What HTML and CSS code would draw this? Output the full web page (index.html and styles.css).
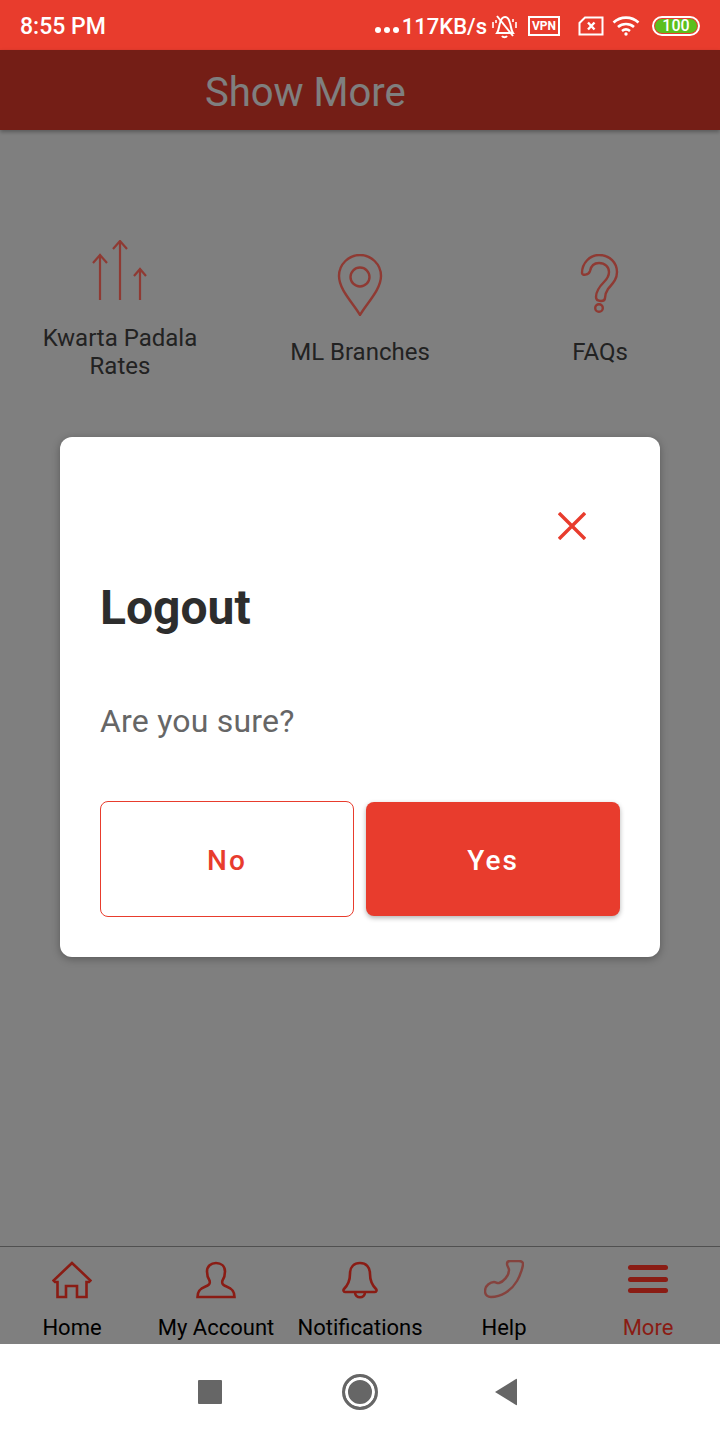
FILE: index.html
```html
<!DOCTYPE html>
<html lang="en">
<head>
    <meta charset="UTF-8">
    <meta name="viewport" content="width=device-width, initial-scale=1.0">
    <title>Show More</title>
    <link rel="stylesheet" href="styles.css">
</head>
<body>
    <!-- Status bar -->
    <div class="status-bar">
        <span class="status-time">8:55 PM</span>
        <div class="status-right">
            <span class="status-dots"><i></i><i></i><i></i></span>
            <span class="status-speed">117KB/s</span>
            <svg class="icon-muted" width="27" height="26" viewBox="0 0 27 26" fill="none" stroke="#fff" stroke-width="2">
                <path d="M6 20c2-3 2-7 3-10 1-4 3-6 5-6s4 2 5 6c1 3 1 7 3 10z"/>
                <path d="M11 23c1 1.500 4 1.500 5 0"/>
                <path d="M6 3l16 20"/>
                <path d="M2 9v6M5 7v3M25 9v6M22 6v3" stroke-width="1.600"/>
            </svg>
            <span class="status-vpn">VPN</span>
            <svg class="icon-sim" width="26" height="20" viewBox="0 0 26 20" fill="none" stroke="#fff" stroke-width="2">
                <path d="M7 1.500h17.500v17H1.500V7z"/>
                <path d="M10 6.500l6.500 7M16.500 6.500l-6.500 7" stroke-width="2.400"/>
            </svg>
            <svg class="icon-wifi" width="30" height="22" viewBox="0 0 30 22" fill="none" stroke="#fff" stroke-width="2.600">
                <path d="M1.500 7.500c7-6.500 18-6.500 25 0"/>
                <path d="M6 12c4.500-4 11.500-4 16 0"/>
                <path d="M10 16c2.500-2 5.500-2 8 0"/>
                <circle cx="14" cy="19" r="1.700" fill="#fff" stroke="none"/>
            </svg>
            <span class="status-battery"><span class="battery-fill">100</span></span>
        </div>
    </div>

    <main class="screen">
        <header class="top-bar">
            <h1>Show More</h1>
        </header>

        <section class="shortcuts">
            <div class="shortcut">
                <svg width="60" height="62" viewBox="0 0 60 62" fill="none" stroke="#8f3a33" stroke-width="2.200">
                    <path d="M10 60V15M3 23l7-8 7 8"/>
                    <path d="M30 60V1M23 9l7-8 7 8"/>
                    <path d="M50 60V29M44 36l6-7 6 7"/>
                </svg>
                <span>Kwarta Padala<br>Rates</span>
            </div>
            <div class="shortcut">
                <svg width="60" height="62" viewBox="0 0 60 62" fill="none" stroke="#8f3a33" stroke-width="2.400">
                    <path d="M30 61C24 50 9 36 9 22 9 10 19 1 30 1s21 9 21 21c0 14-15 28-21 39z"/>
                    <circle cx="30" cy="23" r="9.500"/>
                </svg>
                <span>ML Branches</span>
            </div>
            <div class="shortcut">
                <svg width="60" height="62" viewBox="0 0 60 62" fill="none" stroke="#8f3a33" stroke-width="2.400">
                    <path d="M12 19C12 9 20 1 29 1 40 1 47 9 47 18 47 26 42 30 38 35 36 38 35 41 35 44 35 46 33 47 31 47 28 47 26 46 26 43 26 37 30 32 34 28 37 25 39 22 39 18 39 13 35 9 29 9 24 9 21 12 20 17 19 21 12 22 12 19z"/>
                    <circle cx="29" cy="54" r="3.800"/>
                </svg>
                <span>FAQs</span>
            </div>
        </section>

        <!-- Bottom tabs -->
        <nav class="tabs">
            <a class="tab" href="#">
                <svg width="40" height="40" viewBox="0 0 40 40" fill="none" stroke="#8a1c14" stroke-width="2.600">
                    <path d="M20 3L1.500 20.500l1.500 1.500h2.500v15H14V26h11v11h9.500V22H37l1.500-1.500z"/>
                </svg>
                <span>Home</span>
            </a>
            <a class="tab" href="#">
                <svg width="40" height="40" viewBox="0 0 40 40" fill="none" stroke="#8a1c14" stroke-width="2.600">
                    <path d="M1.500 37c0-7 4-9 8-10.500 4-1.500 5-3 4-6-2-3-2.500-6-2.500-9C11 6 15 3 20 3s9 3 9 8.500c0 3-.5 6-2.500 9-1 3 0 4.500 4 6 4 1.500 8 3.500 8 10.500z"/>
                </svg>
                <span>My Account</span>
            </a>
            <a class="tab" href="#">
                <svg width="40" height="40" viewBox="0 0 40 40" fill="none" stroke="#8a1c14" stroke-width="2.600">
                    <path d="M20 3c-6 0-10 4-10 11 0 7-2 11-6 15-1 1-.5 3 1 3h30c1.500 0 2-2 1-3-4-4-6-8-6-15 0-7-4-11-10-11z"/>
                    <path d="M15 32c0 7 10 7 10 0"/>
                </svg>
                <span>Notifications</span>
            </a>
            <a class="tab tab-help" href="#">
                <svg width="40" height="40" viewBox="0 0 40 40" fill="none" stroke="#8a1c14" stroke-width="2.400">
                    <path d="M26 1c-2 0-3 1-3 3 0 2 2 4 2 6 0 6-6 12-10 13-2 .5-3-1-5-1-3 0-9 3-9 9 0 4 3 6 6 6 10 0 20-6 26-16 4-7 6-15 6-17 0-2-2-3-4-3z"/>
                </svg>
                <span>Help</span>
            </a>
            <a class="tab tab-active" href="#">
                <span class="menu-icon"><i></i><i></i><i></i></span>
                <span>More</span>
            </a>
        </nav>

        <!-- Logout dialog -->
        <div class="scrim">
            <div class="dialog">
                <div class="dialog-close">
                    <svg width="28" height="28" viewBox="0 0 28 28" fill="none" stroke="#e83c2d" stroke-width="3.400">
                        <path d="M1 1l26 26M27 1L1 27"/>
                    </svg>
                </div>
                <h2>Logout</h2>
                <p>Are you sure?</p>
                <div class="dialog-buttons">
                    <button class="btn btn-outline">No</button>
                    <button class="btn btn-solid">Yes</button>
                </div>
            </div>
        </div>
    </main>

    <!-- Android navigation -->
    <div class="system-nav">
        <span class="sys-square"></span>
        <span class="sys-home"></span>
        <svg width="24" height="28" viewBox="0 0 24 28"><path d="M23 1.500v25q0 1-1 .5L1 14 22 1q1-.5 1 .5z" fill="#666"/></svg>
    </div>
</body>
</html>
```

FILE: styles.css
```css
* {
    margin: 0;
    padding: 0;
    box-sizing: border-box;
}

body {
    font-family: Roboto, sans-serif;
    width: 720px;
    height: 1440px;
    display: flex;
    flex-direction: column;
    background-color: white;
    color: #333;
    overflow: hidden;
}

/* Status bar */
.status-bar {
    height: 50px;
    background-color: #e83c2d;
    color: white;
    display: flex;
    justify-content: space-between;
    align-items: center;
    padding: 2px 20px 0;
    font-weight: 500;
    font-size: 23px;
}

.status-right {
    display: flex;
    align-items: center;
}

.status-dots {
    display: flex;
    gap: 3px;
    margin-top: 8px;
    margin-right: 3px;
}

.status-dots i {
    width: 6px;
    height: 6px;
    border-radius: 50%;
    background-color: white;
}

.status-speed {
    font-size: 22px;
}

.icon-muted {
    margin-left: 4px;
}

.status-vpn {
    margin-left: 10px;
    width: 32px;
    height: 20px;
    border: 2px solid white;
    font-size: 12px;
    font-weight: 700;
    line-height: 16px;
    text-align: center;
}

.icon-sim {
    margin-left: 18px;
}

.icon-wifi {
    margin-left: 8px;
}

.status-battery {
    margin-left: 10px;
    width: 48px;
    height: 20px;
    border: 2px solid white;
    border-radius: 10px;
    padding: 1px;
    display: flex;
}

.battery-fill {
    flex: 1;
    background-color: #5cbf1e;
    border-radius: 7px;
    font-size: 16px;
    line-height: 14px;
    text-align: center;
}

/* Main screen */
.screen {
    position: relative;
    flex: 1;
    display: flex;
    flex-direction: column;
    background-color: white;
}

.top-bar {
    height: 80px;
    background-color: #e83c2d;
    color: white;
    padding: 4px 0 0 205px;
    display: flex;
    align-items: center;
    box-shadow: 0 2px 4px rgba(0, 0, 0, 0.3);
}

.top-bar h1 {
    font-size: 40px;
    font-weight: 400;
}

/* these two sit above the scrim so their dimmed colours can be set directly */
.shortcuts {
    position: relative;
    z-index: 2;
    display: grid;
    grid-template-columns: repeat(3, 240px);
    align-items: center;
    padding-top: 110px;
}

.shortcut {
    display: flex;
    flex-direction: column;
    align-items: center;
    gap: 22px;
    font-size: 24px;
    line-height: 28px;
    text-align: center;
    color: #222;
}

/* Tabs */
.tabs {
    position: relative;
    z-index: 2;
    margin-top: auto;
    height: 98px;
    border-top: 1px solid #505050;
    display: grid;
    grid-template-columns: repeat(5, 144px);
}

.tab {
    display: flex;
    flex-direction: column;
    align-items: center;
    padding-top: 13px;
    gap: 14px;
    text-decoration: none;
    color: black;
    font-size: 22px;
    line-height: 28px;
    white-space: nowrap;
}

.tab-help svg {
    opacity: 0.6;
}

.tab-active {
    color: #8a1c14;
}

.menu-icon {
    width: 40px;
    height: 40px;
    padding-bottom: 2px;
    display: flex;
    flex-direction: column;
    justify-content: center;
    gap: 6.500px;
}

.menu-icon i {
    height: 5px;
    border-radius: 3px;
    background-color: #8a1c14;
}

/* Dialog */
.scrim {
    position: absolute;
    inset: 0;
    background-color: rgba(0, 0, 0, 0.5);
    display: flex;
    align-items: center;
    justify-content: center;
}

.dialog {
    width: 600px;
    height: 520px;
    padding: 75px 40px 40px;
    background-color: white;
    border-radius: 12px;
    box-shadow: 0 2px 8px rgba(0, 0, 0, 0.3);
}

.dialog-close {
    height: 28px;
    display: flex;
    justify-content: flex-end;
    padding-right: 34px;
}

.dialog h2 {
    margin-top: 41px;
    font-size: 48px;
    line-height: 54px;
    font-weight: 700;
    color: #2d2d2d;
}

.dialog p {
    margin-top: 68px;
    font-size: 32px;
    line-height: 36px;
    letter-spacing: 0.2px;
    color: #666;
}

.dialog-buttons {
    margin-top: 62px;
    display: flex;
    align-items: center;
    gap: 12px;
}

.btn {
    width: 254px;
    height: 116px;
    padding-top: 3px;
    border-radius: 8px;
    font-family: Roboto, sans-serif;
    font-size: 28px;
    font-weight: 500;
    letter-spacing: 2px;
}

.btn-outline {
    border: 1px solid #e83c2d;
    background-color: white;
    color: #e83c2d;
}

.btn-solid {
    height: 114px;
    border: none;
    background-color: #e83c2d;
    color: white;
    box-shadow: 0 2px 5px rgba(0, 0, 0, 0.3);
}

/* System navigation */
.system-nav {
    height: 96px;
    background-color: white;
    display: flex;
    align-items: center;
    padding-left: 198px;
}

.sys-square {
    width: 24px;
    height: 24px;
    background-color: #666;
    border-radius: 1px;
}

.sys-home {
    width: 36px;
    height: 36px;
    margin: 0 116px 0 120px;
    border-radius: 50%;
    background-color: #666;
    border: 3px solid #666;
    box-shadow: inset 0 0 0 3px white;
}
```
